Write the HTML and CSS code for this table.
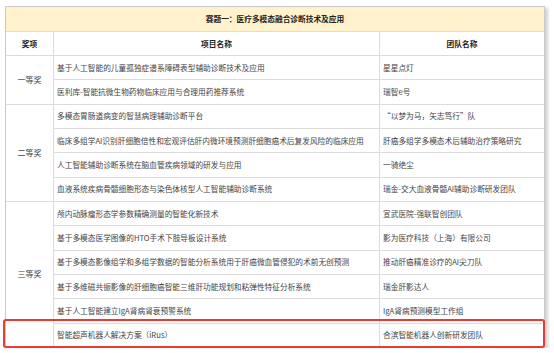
FILE: index.html
```html
<!DOCTYPE html>
<html lang="zh">
<head>
<meta charset="utf-8">
<link rel="stylesheet" href="styles.css">
</head>
<body>
<div class="wrap">
  <div class="grid">
    <div class="cell title">赛题一：医疗多模态融合诊断技术及应用</div>
    <div class="cell head">奖项</div>
    <div class="cell head">项目名称</div>
    <div class="cell head">团队名称</div>

    <div class="cell prize span2">一等奖</div>
    <div class="cell">基于人工智能的儿童孤独症谱系障碍表型辅助诊断技术及应用</div>
    <div class="cell">星星点灯</div>
    <div class="cell">医利库-智能抗微生物药物临床应用与合理用药推荐系统</div>
    <div class="cell">瑞智e号</div>

    <div class="cell prize span4">二等奖</div>
    <div class="cell">多模态胃肠道病变的智慧病理辅助诊断平台</div>
    <div class="cell">“以梦为马，矢志笃行”队</div>
    <div class="cell">临床多组学AI识别肝细胞倍性和宏观评估肝内微环境预测肝细胞癌术后复发风险的临床应用</div>
    <div class="cell">肝癌多组学多模态术后辅助治疗策略研究</div>
    <div class="cell">人工智能辅助诊断系统在脑血管疾病领域的研发与应用</div>
    <div class="cell">一骑绝尘</div>
    <div class="cell">血液系统疾病骨髓细胞形态与染色体核型人工智能辅助诊断系统</div>
    <div class="cell">瑞金-交大血液骨髓AI辅助诊断研发团队</div>

    <div class="cell prize span6">三等奖</div>
    <div class="cell">颅内动脉瘤形态学参数精确测量的智能化新技术</div>
    <div class="cell">宣武医院-强联智创团队</div>
    <div class="cell">基于多模态医学图像的HTO手术下肢导板设计系统</div>
    <div class="cell">影为医疗科技（上海）有限公司</div>
    <div class="cell">基于多模态影像组学和多组学数据的智能分析系统用于肝癌微血管侵犯的术前无创预测</div>
    <div class="cell">推动肝癌精准诊疗的AI尖刀队</div>
    <div class="cell">基于多维磁共振影像的肝细胞癌智能三维肝功能规划和粘弹性特征分析系统</div>
    <div class="cell">瑞金肝影达人</div>
    <div class="cell">基于人工智能建立IgA肾病肾衰预警系统</div>
    <div class="cell">IgA肾病预测模型工作组</div>
    <div class="cell">智能超声机器人解决方案（iRus）</div>
    <div class="cell">合滨智能机器人创新研发团队</div>
  </div>
  <div class="highlight"></div>
</div>
</body>
</html>
```
FILE: styles.css
```css
html, body {
  margin: 0;
  padding: 0;
  background: #ffffff;
}
body {
  font-family: "Noto Sans CJK SC", "Noto Sans", sans-serif;
  color: #444;
}
.wrap {
  position: relative;
  width: 540px;
  margin: 6px 0 0 5px;
}
.grid {
  display: grid;
  grid-template-columns: 47px 325px 164px;
  grid-template-rows: 24px 23px repeat(12, 23.33px);
  gap: 1px;
  background: #dcdcdc;
  border: 1px solid #cacaca;
  box-shadow: 3px 2px 3px rgba(0, 0, 0, 0.18);
  font-size: 7.7px;
  line-height: 1;
}
.cell {
  background: #ffffff;
  display: flex;
  align-items: center;
  padding-left: 3px;
  white-space: nowrap;
  overflow: hidden;
}
.title {
  grid-column: 1 / -1;
  background: #fff2cc;
  justify-content: center;
  padding-left: 0;
  font-weight: bold;
  color: #222;
}
.head {
  justify-content: center;
  padding-left: 0;
  font-weight: bold;
  color: #222;
}
.prize {
  justify-content: center;
  padding-left: 0;
  font-size: 8px;
}
.span2 { grid-row: span 2; }
.span4 { grid-row: span 4; }
.span6 { grid-row: span 6; }
.highlight {
  position: absolute;
  left: -2px;
  top: 313px;
  width: 538px;
  height: 25px;
  border: 2px solid #ea3b33;
  border-radius: 3px;
  pointer-events: none;
}
```
